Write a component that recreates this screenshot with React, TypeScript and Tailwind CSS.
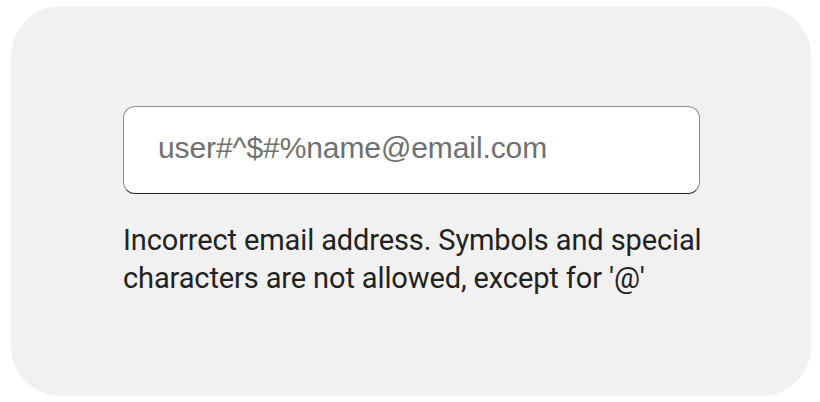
export default function App() {
  return (
    <div className="w-[820px] h-[402px] bg-white pt-[6px] pl-[11px]">
      <div className="w-[800px] h-[390px] rounded-[50px] bg-[#f1f1f1] pt-[100px] pl-[112px]">
        <div className="w-[577px] h-[88px] rounded-[12px] border border-[#8a8a8a] border-b-[#222] bg-white flex items-center pl-[34px] pb-[6px]">
          <span className="font-['Liberation_Sans',sans-serif] text-[30px] tracking-[-0.1px] text-[#707070]">
            user#^$#%name@email.com
          </span>
        </div>
        <p className="mt-[27px] w-[600px] font-['Roboto',sans-serif] text-[29px] tracking-[-0.12px] leading-[38px] text-[#222]">
          Incorrect email address. Symbols and special
          <br />
          characters are not allowed, except for '@'
        </p>
      </div>
    </div>
  );
}
